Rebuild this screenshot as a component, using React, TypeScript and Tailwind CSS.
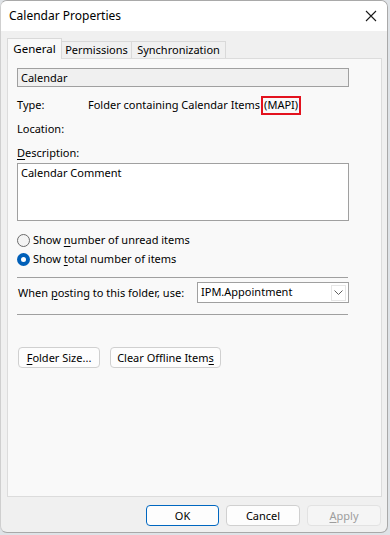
import React from "react";

const font = { fontFamily: '"Noto Sans", "Open Sans", sans-serif' };

function U({ children }: { children: React.ReactNode }) {
  return <span className="underline underline-offset-2 decoration-1">{children}</span>;
}

function Radio({ checked }: { checked?: boolean }) {
  return checked ? (
    <span className="w-[13px] h-[13px] rounded-full bg-[#005fb8] flex items-center justify-center shrink-0">
      <span className="w-[5px] h-[5px] rounded-full bg-white" />
    </span>
  ) : (
    <span className="w-[13px] h-[13px] rounded-full border border-[#6b6b6b] bg-[#f4f4f4] shrink-0" />
  );
}

function Btn({ children, w, primary, disabled }: { children: React.ReactNode; w: string; primary?: boolean; disabled?: boolean }) {
  return (
    <div
      className={`${w} h-[21px] rounded-[4px] border flex items-center justify-center text-[11px] ${
        primary
          ? "border-[#0067c0] bg-[#fdfdfd] text-black"
          : disabled
          ? "border-[#e2e2e2] bg-[#f5f5f5] text-[#9d9d9d]"
          : "border-[#d0d0d0] bg-[#fdfdfd] text-black"
      }`}
    >
      {children}
    </div>
  );
}

export default function App() {
  return (
    <div className="w-[390px] h-[535px] bg-[#dfe3e7] overflow-hidden" style={font}>
      <div className="w-[388px] h-[533px] rounded-t-[7px] rounded-b-[7px] border border-[#a9a9a9] border-l-[#cfcfcf] bg-[#f0f0f0] overflow-hidden flex flex-col text-black text-[11px] leading-[16px]">
        {/* Title bar */}
        <div className="h-[30px] bg-white flex items-center justify-between pl-[8px] pr-[8px] shrink-0">
          <span className="text-[12px]">Calendar Properties</span>
          <svg width="12" height="12" viewBox="0 0 12 12" className="mr-[2px]">
            <path d="M1 1 L11 11 M11 1 L1 11" stroke="#1a1a1a" strokeWidth="1.1" />
          </svg>
        </div>
        {/* body */}
        <div className="flex-1 flex flex-col pl-[6px] pr-[6px]">
          {/* tabs */}
          <div className="flex items-end h-[27px] pt-[7px] relative z-10">
            <div className="w-[55px] bg-[#f9f9f9] border border-b-0 border-[#d9d9d9] flex items-start justify-center pt-[2px] mb-[-1px] h-[21px] text-[11.5px]">
              General
            </div>
            <div className="h-[17px] w-[70px] bg-[#f0f0f0] border border-l-0 border-b-0 border-[#d9d9d9] flex items-center justify-center">
              Permissions
            </div>
            <div className="h-[17px] w-[94px] bg-[#f0f0f0] border border-l-0 border-b-0 border-[#d9d9d9] flex items-center justify-center">
              Synchronization
            </div>
          </div>
          {/* panel */}
          <div className="w-[375px] h-[439px] bg-[#f9f9f9] border border-[#dcdcdc] flex flex-col pl-[9px] pt-[9px]">
            <div className="w-[332px] h-[19px] bg-[#f0f0f0] border border-[#a0a0a0] flex items-center pl-[3px]">Calendar</div>
            <div className="mt-[10px] h-[16px] flex items-center">
              <span className="w-[71px]">Type:</span>
              <span>Folder containing Calendar Items</span>
              <span className="ml-[1px] border-2 border-[#e3121e] h-[19px] flex items-center px-[1px]">(MAPI)</span>
            </div>
            <div className="mt-[8px] h-[16px] flex items-center">Location:</div>
            <div className="mt-[8px] h-[16px] flex items-center">
              <span>
                <U>D</U>escription:
              </span>
            </div>
            <div className="mt-[2px] w-[332px] h-[58px] bg-white border border-[#a0a0a0] pl-[3px] pt-[1px]">Calendar Comment</div>
            <div className="mt-[11px] h-[16px] flex items-center gap-[3px]">
              <Radio />
              <span>
                Show <U>n</U>umber of unread items
              </span>
            </div>
            <div className="mt-[3px] h-[16px] flex items-center gap-[3px]">
              <Radio checked />
              <span>
                Show <U>t</U>otal number of items
              </span>
            </div>
            <div className="mt-[10px] w-[331px] h-px bg-[#a0a0a0]" />
            <div className="mt-[4px] h-[21px] flex items-center">
              <span className="w-[180px] whitespace-nowrap pl-[1px]">
                When <U>p</U>osting to this folder, use:
              </span>
              <div className="w-[152px] h-[21px] bg-white border border-[#a0a0a0] flex items-center justify-between pl-[3px] pr-[2px]">
                <span className="self-start leading-[17px]">IPM.Appointment</span>
                <div className="w-[15px] h-[16px] border border-[#e6e6e6] flex items-center justify-center">
                  <svg width="9" height="5" viewBox="0 0 9 5">
                    <path d="M0.5 0.5 L4.5 4.5 L8.5 0.5" fill="none" stroke="#606060" strokeWidth="1" />
                  </svg>
                </div>
              </div>
            </div>
            <div className="mt-[11px] w-[331px] h-px bg-[#a0a0a0]" />
            <div className="mt-[32px] flex gap-[10px] pl-[1px]">
              <Btn w="w-[82px]">
                <span>
                  <U>F</U>older Size...
                </span>
              </Btn>
              <Btn w="w-[111px]">
                <span>
                  Clear Offline Item<U>s</U>
                </span>
              </Btn>
            </div>
          </div>
          {/* bottom buttons */}
          <div className="mt-[8px] flex justify-end gap-[7px]">
            <Btn w="w-[73px]" primary>
              OK
            </Btn>
            <Btn w="w-[74px]">Cancel</Btn>
            <Btn w="w-[74px]" disabled>
              <span>
                <U>A</U>pply
              </span>
            </Btn>
          </div>
        </div>
      </div>
    </div>
  );
}
